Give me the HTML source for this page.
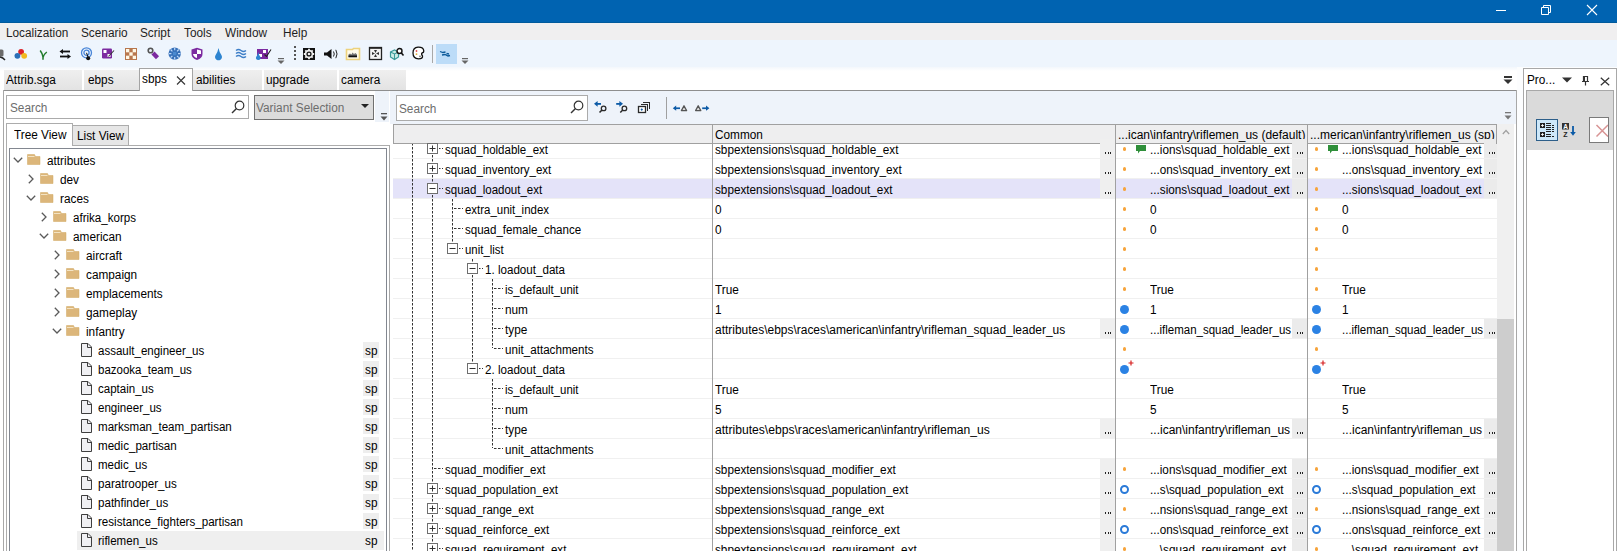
<!DOCTYPE html><html><head><meta charset="utf-8"><style>*{margin:0;padding:0}
html,body{width:1617px;height:551px;overflow:hidden;background:#fff}
body{position:relative;font-family:"Liberation Sans",sans-serif;font-size:12px}
div,span,svg{position:absolute}
.t{line-height:12px;white-space:pre}
</style></head><body><div style="left:0px;top:0px;width:1617px;height:23px;background:#0063b1"></div>
<div style="left:0px;top:22px;width:1617px;height:1px;background:#005a9c"></div>
<svg style="left:1495px;top:5px;" width="12" height="12" viewBox="0 0 12 12"><path d="M1 5.5H11" stroke="#fff" stroke-width="1"/></svg>
<svg style="left:1539px;top:4px;" width="12" height="12" viewBox="0 0 12 12"><path d="M2.5 3.5h7v7h-7z" fill="none" stroke="#fff"/><path d="M4.5 3.5V1.5h7v7h-2" fill="none" stroke="#fff"/></svg>
<svg style="left:1586px;top:4px;" width="12" height="12" viewBox="0 0 12 12"><path d="M1 1L11 11M11 1L1 11" stroke="#fff" stroke-width="1.1"/></svg>
<div style="left:0px;top:23px;width:1617px;height:17px;background:#f0eff0"></div>
<span class="t" style="left:6px;top:27px;transform:scaleX(0.9830);transform-origin:0 0;color:#1e1e1e">Localization</span>
<span class="t" style="left:81px;top:27px;transform:scaleX(0.9830);transform-origin:0 0;color:#1e1e1e">Scenario</span>
<span class="t" style="left:140px;top:27px;transform:scaleX(0.9830);transform-origin:0 0;color:#1e1e1e">Script</span>
<span class="t" style="left:184px;top:27px;transform:scaleX(0.9830);transform-origin:0 0;color:#1e1e1e">Tools</span>
<span class="t" style="left:225px;top:27px;transform:scaleX(0.9830);transform-origin:0 0;color:#1e1e1e">Window</span>
<span class="t" style="left:283px;top:27px;transform:scaleX(0.9830);transform-origin:0 0;color:#1e1e1e">Help</span>
<div style="left:0px;top:40px;width:1617px;height:27px;background:#eef5fd"></div>
<svg style="left:0px;top:48px;" width="8" height="14" viewBox="0 0 8 14"><rect x="-3" y="1.5" width="6.5" height="7" rx="1.5" fill="#6a6a6a"/><path d="M0 9Q3 9.5 5 12" fill="none" stroke="#222" stroke-width="1.4"/></svg>
<svg style="left:13px;top:47px;" width="16" height="14" viewBox="0 0 16 14"><circle cx="8.1" cy="4.8" r="2.9" fill="#dc2228"/><circle cx="4.4" cy="8.8" r="2.9" fill="#2a70b8"/><circle cx="11.2" cy="8.8" r="2.9" fill="#f2b81e"/></svg>
<svg style="left:38px;top:49px;" width="11" height="12" viewBox="0 0 11 12"><path d="M5 10.8V8Q4.5 4.5 2.2 1.5M5 8.5Q6 5 8.8 3" fill="none" stroke="#1f7a2a" stroke-width="1.5"/></svg>
<svg style="left:59px;top:48px;" width="13" height="12" viewBox="0 0 13 12"><path d="M11 3.5H3" stroke="#111" stroke-width="1.8"/><path d="M0.5 3.5L4 1v5z" fill="#111"/><path d="M1 8.5H9" stroke="#111" stroke-width="1.8"/><path d="M12 8.5L8.5 6v5z" fill="#111"/></svg>
<svg style="left:80px;top:47px;" width="14" height="14" viewBox="0 0 14 14"><circle cx="6.5" cy="5.8" r="5" fill="none" stroke="#4a86d8" stroke-width="1.3"/><circle cx="6.5" cy="5.8" r="2.6" fill="none" stroke="#4a86d8" stroke-width="1.3"/><path d="M6.5 5.8L8 10" stroke="#111" stroke-width="1"/><circle cx="8.2" cy="11.2" r="2" fill="#111"/></svg>
<svg style="left:101px;top:47px;" width="14" height="13" viewBox="0 0 14 13"><rect x="1" y="1.5" width="10" height="10" rx="1.2" fill="#7c2aa0"/><rect x="2.5" y="3" width="3" height="3" fill="#fff"/><rect x="6.5" y="7" width="3" height="3" fill="#fff"/><path d="M13 3.5L7.5 9.5" stroke="#333" stroke-width="1.1"/></svg>
<svg style="left:124px;top:47px;" width="14" height="14" viewBox="0 0 14 14"><rect x="1" y="1" width="12" height="12" fill="#b8774e"/><rect x="2" y="2" width="3.3" height="3.3" fill="#fff8e6"/><rect x="8.7" y="2" width="3.3" height="3.3" fill="#fff8e6"/><rect x="5.3" y="5.3" width="3.4" height="3.4" fill="#fff8e6"/><rect x="2" y="8.7" width="3.3" height="3.3" fill="#fff8e6"/><rect x="8.7" y="8.7" width="3.3" height="3.3" fill="#fff8e6"/></svg>
<svg style="left:146px;top:47px;" width="14" height="14" viewBox="0 0 14 14"><circle cx="4.5" cy="3.5" r="2.3" fill="none" stroke="#555" stroke-width="1.6"/><path d="M7 6L11.5 10.8" stroke="#7c2aa0" stroke-width="4.2"/></svg>
<svg style="left:167px;top:47px;" width="15" height="14" viewBox="0 0 15 14"><circle cx="7.7" cy="6.6" r="6.2" fill="#3670b8"/><g stroke="#bcd8fa" stroke-width="1.2"><path d="M7.7 0.8v2.5M7.7 9.9v2.5M1.9 6.6h2.5M11 6.6h2.5M3.6 2.5l1.8 1.8M10 8.9l1.8 1.8M11.8 2.5l-1.8 1.8M5.4 8.9l-1.8 1.8"/></g><rect x="6" y="4.9" width="3.4" height="3.4" fill="#4a8ad0"/></svg>
<svg style="left:190px;top:47px;" width="14" height="14" viewBox="0 0 14 14"><path d="M1.5 2.5L7 0.8L12.5 2.5V7Q12.5 11 7 13Q1.5 11 1.5 7z" fill="#7c2aa0"/><path d="M7 2.5L11 3.5V7H7z" fill="#fff"/><path d="M3 7H7V11Q3.5 10 3 7z" fill="#fff"/></svg>
<svg style="left:213px;top:47px;" width="11" height="14" viewBox="0 0 11 14"><path d="M5.5 1Q6.2 5 8.5 8.2Q9.8 11 7.5 12.7Q5.5 13.8 3.5 12.7Q1.2 11 2.5 8.2Q4.8 5 5.5 1z" fill="#2d84d0"/></svg>
<svg style="left:235px;top:48px;" width="12" height="11" viewBox="0 0 12 11"><g fill="none" stroke="#3e7fc8" stroke-width="1.4"><path d="M1 2.5Q3.5 0.5 6 2.5T11 2.5"/><path d="M1 5.5Q3.5 3.5 6 5.5T11 5.5"/><path d="M1 8.5Q3.5 6.5 6 8.5T11 8.5"/></g></svg>
<svg style="left:254px;top:47px;" width="18" height="14" viewBox="0 0 18 14"><rect x="3" y="2" width="11" height="10" fill="#7c2aa0"/><rect x="9" y="3" width="3" height="3" fill="#fff"/><rect x="5" y="7" width="3" height="3" fill="#fff"/><path d="M10.5 7.5L12.5 9.5L17 2.5" fill="none" stroke="#222" stroke-width="1.1"/><path d="M4.3 5Q4.8 8 6.5 10Q7.3 12.5 4.3 13Q1.3 12.5 2.1 10Q3.8 8 4.3 5z" fill="#2d84d0"/></svg>
<svg style="left:277px;top:57px;" width="8" height="7" viewBox="0 0 8 7"><rect x="1" y="1" width="6" height="1.2" fill="#666"/><path d="M0.5 3.5h7L4 7z" fill="#666"/></svg>
<div style="left:294px;top:46px;width:2px;height:2px;background:#555"></div>
<div style="left:294px;top:50px;width:2px;height:2px;background:#555"></div>
<div style="left:294px;top:54px;width:2px;height:2px;background:#555"></div>
<div style="left:294px;top:58px;width:2px;height:2px;background:#555"></div>
<svg style="left:302px;top:47px;" width="14" height="14" viewBox="0 0 14 14"><rect x="1" y="1" width="12" height="12" fill="#111"/><circle cx="7" cy="7" r="4.2" fill="#eee"/><g stroke="#eee" stroke-width="1.8"><path d="M7 1.8v10.4M1.8 7h10.4M3.3 3.3l7.4 7.4M10.7 3.3l-7.4 7.4"/></g><circle cx="7" cy="7" r="2.6" fill="#111"/><circle cx="7" cy="7" r="1.3" fill="#eee"/></svg>
<svg style="left:323px;top:48px;" width="16" height="12" viewBox="0 0 16 12"><path d="M1 4.5H4L8.5 1V11L4 7.5H1z" fill="#111"/><path d="M10.5 3.5Q12 6 10.5 8.5M12.8 1.8Q15.3 6 12.8 10.2" fill="none" stroke="#222" stroke-width="1"/></svg>
<svg style="left:345px;top:47px;" width="16" height="14" viewBox="0 0 16 14"><path d="M1.5 2.5h6l1 -1h6v11h-13z" fill="#fffbea" stroke="#edd27c" stroke-width="1.6"/><path d="M3.5 10V7.5L5 6.5L6.5 7.5L7.5 5.5L9 7L10.5 6L12 7.5V10z" fill="#777"/><rect x="3.5" y="8.5" width="8.5" height="1.8" fill="#111"/></svg>
<svg style="left:368px;top:46px;" width="15" height="15" viewBox="0 0 15 15"><rect x="1.5" y="1.5" width="12" height="12" fill="#f4f4f4" stroke="#222" stroke-width="1.3"/><rect x="1" y="1" width="13" height="1.8" fill="#222"/><g fill="#333"><path d="M7.5 7L6 4h3z"/><path d="M7.5 8L6 11h3z"/><path d="M7 7.5L4 6v3z"/><path d="M8 7.5L11 6v3z"/></g></svg>
<svg style="left:389px;top:47px;" width="16" height="14" viewBox="0 0 16 14"><path d="M1.5 5L5.5 3L9.5 5V10L5.5 12.5L1.5 10z" fill="#cfeee8" stroke="#3a9a9a" stroke-width="1.2"/><path d="M1.5 5L5.5 7L9.5 5M5.5 7V12.5" fill="none" stroke="#3a9a9a" stroke-width="1.1"/><circle cx="10.5" cy="4" r="2.5" fill="#fff" stroke="#111" stroke-width="1.4"/><path d="M12.2 5.8L14.5 8.5" stroke="#111" stroke-width="1.6"/></svg>
<svg style="left:412px;top:46px;" width="13" height="14" viewBox="0 0 13 14"><path d="M6 1.2Q11.5 1 11.8 5Q12 6.5 10 7Q9 8 10.5 10Q11 12.8 6.5 12.8Q1 12.5 1 7Q1 1.5 6 1.2z" fill="#fff" stroke="#111" stroke-width="1.3"/><circle cx="4.5" cy="5" r="0.9" fill="#e05050"/><circle cx="4.5" cy="8.2" r="0.9" fill="#e0b040"/><circle cx="8" cy="10.3" r="0.9" fill="#777"/></svg>
<div style="left:432px;top:45px;width:1px;height:18px;background:#a8a8a8"></div>
<div style="left:436px;top:44px;width:21px;height:20px;background:#bcdcf8"></div>
<svg style="left:439px;top:50px;" width="14" height="8" viewBox="0 0 14 8"><path d="M1 1.5L4 2.5L6.5 2M3 5L6 4.5L9 6L11 5.5M7.5 3.5L10 4" fill="none" stroke="#0b5a9a" stroke-width="1.3"/></svg>
<svg style="left:461px;top:57px;" width="8" height="7" viewBox="0 0 8 7"><rect x="1" y="1" width="6" height="1.2" fill="#666"/><path d="M0.5 3.5h7L4 7z" fill="#666"/></svg>
<div style="left:0px;top:67px;width:1517px;height:23px;background:linear-gradient(#f3f7fc,#fff 4px)"></div>
<div style="left:4px;top:70px;width:78px;height:20px;background:linear-gradient(#efefef,#e3e3e3)"></div>
<span class="t" style="left:6px;top:74px;transform:scaleX(0.9830);transform-origin:0 0;color:#000">Attrib.sga</span>
<div style="left:84px;top:70px;width:55px;height:20px;background:linear-gradient(#efefef,#e3e3e3)"></div>
<span class="t" style="left:88px;top:74px;transform:scaleX(0.9830);transform-origin:0 0;color:#000">ebps</span>
<div style="left:193px;top:70px;width:69px;height:20px;background:linear-gradient(#efefef,#e3e3e3)"></div>
<span class="t" style="left:196px;top:74px;transform:scaleX(0.9830);transform-origin:0 0;color:#000">abilities</span>
<div style="left:264px;top:70px;width:73px;height:20px;background:linear-gradient(#efefef,#e3e3e3)"></div>
<span class="t" style="left:266px;top:74px;transform:scaleX(0.9830);transform-origin:0 0;color:#000">upgrade</span>
<div style="left:339px;top:70px;width:67px;height:20px;background:linear-gradient(#efefef,#e3e3e3)"></div>
<span class="t" style="left:341px;top:74px;transform:scaleX(0.9830);transform-origin:0 0;color:#000">camera</span>
<div style="left:139px;top:68px;width:54px;height:23px;background:#fff;border:1px solid #a4a4a4;border-bottom:none;box-sizing:border-box"></div>
<span class="t" style="left:142px;top:73px;transform:scaleX(0.9830);transform-origin:0 0;color:#000">sbps</span>
<svg style="left:176px;top:75px;" width="10" height="10" viewBox="0 0 10 10"><path d="M1 1.5L9 9.5M9 1.5L1 9.5" stroke="#333" stroke-width="1.1"/></svg>
<svg style="left:1503px;top:75px;" width="10" height="10" viewBox="0 0 10 10"><rect x="1" y="1" width="8" height="2" fill="#333"/><path d="M0.5 4.5h9L5 9z" fill="#333"/></svg>
<div style="left:3px;top:90px;width:136px;height:1px;background:#8e8e8e"></div>
<div style="left:193px;top:90px;width:1324px;height:1px;background:#8e8e8e"></div>
<div style="left:3px;top:90px;width:1px;height:461px;background:#a8a8a8"></div>
<div style="left:1516px;top:90px;width:1px;height:461px;background:#a8a8a8"></div>
<div style="left:4px;top:91px;width:385px;height:460px;background:#fff"></div>
<div style="left:6px;top:95px;width:243px;height:24px;background:#fff;border:1px solid #ababab;box-sizing:border-box"></div>
<span class="t" style="left:10px;top:102px;transform:scaleX(0.9830);transform-origin:0 0;color:#6d6d6d">Search</span>
<div style="left:254px;top:95px;width:120px;height:25px;background:#dcdcdc;border:1px solid #707070;box-sizing:border-box"></div>
<span class="t" style="left:256px;top:102px;transform:scaleX(0.9830);transform-origin:0 0;color:#6d6d6d">Variant Selection</span>
<svg style="left:361px;top:104px;" width="8" height="5" viewBox="0 0 8 5"><path d="M0 0h8L4 4z" fill="#222"/></svg>
<div style="left:375px;top:91px;width:14px;height:31px;background:#eef3fa"></div>
<svg style="left:380px;top:113px;" width="8" height="8" viewBox="0 0 8 8"><rect x="1" y="0" width="6" height="1.3" fill="#555"/><path d="M0.5 3.5h7L4 7.5z" fill="#555"/></svg>
<div style="left:6px;top:145px;width:383px;height:1px;background:#acacac"></div>
<div style="left:6px;top:123px;width:67px;height:23px;background:#fff;border:1px solid #acacac;border-bottom:none;box-sizing:border-box"></div>
<div style="left:73px;top:125px;width:56px;height:21px;background:#e6e6e6;border:1px solid #acacac;border-left:none;box-sizing:border-box"></div>
<span class="t" style="left:14px;top:129px;transform:scaleX(0.9830);transform-origin:0 0;color:#000">Tree View</span>
<span class="t" style="left:77px;top:130px;transform:scaleX(0.9830);transform-origin:0 0;color:#000">List View</span>
<div style="left:6px;top:123px;width:1px;height:428px;background:#acacac"></div>
<div style="left:9px;top:148px;width:378px;height:403px;border:1px solid #828790;border-bottom:none;box-sizing:border-box;background:#fff"></div>
<div style="left:389px;top:145px;width:1px;height:406px;background:#a8a8a8"></div>
<div style="left:391px;top:91px;width:1px;height:460px;background:#eef1f5"></div>
<svg style="left:13px;top:157px;" width="10" height="6" viewBox="0 0 10 6"><path d="M0.8 0.8L5 5L9.2 0.8" fill="none" stroke="#5a5a5a" stroke-width="1.3"/></svg>
<svg style="left:27px;top:153px;" width="14" height="12" viewBox="0 0 14 12"><path d="M0.5 1.5h7l1 2h4.5v8h-12.5z" fill="#dcb67a"/><path d="M0.5 1.5h7l1 2h4.5v8h-12.5z" fill="none" stroke="#d0a860" stroke-width="0.5"/><rect x="1" y="3" width="6.5" height="1" fill="#f3e3c3"/></svg>
<span class="t" style="left:47px;top:155px;transform:scaleX(0.9830);transform-origin:0 0;color:#000">attributes</span>
<svg style="left:28px;top:174px;" width="6" height="10" viewBox="0 0 6 10"><path d="M0.8 0.8L5 5L0.8 9.2" fill="none" stroke="#5a5a5a" stroke-width="1.3"/></svg>
<svg style="left:40px;top:172px;" width="14" height="12" viewBox="0 0 14 12"><path d="M0.5 1.5h7l1 2h4.5v8h-12.5z" fill="#dcb67a"/><path d="M0.5 1.5h7l1 2h4.5v8h-12.5z" fill="none" stroke="#d0a860" stroke-width="0.5"/><rect x="1" y="3" width="6.5" height="1" fill="#f3e3c3"/></svg>
<span class="t" style="left:60px;top:174px;transform:scaleX(0.9830);transform-origin:0 0;color:#000">dev</span>
<svg style="left:26px;top:195px;" width="10" height="6" viewBox="0 0 10 6"><path d="M0.8 0.8L5 5L9.2 0.8" fill="none" stroke="#5a5a5a" stroke-width="1.3"/></svg>
<svg style="left:40px;top:191px;" width="14" height="12" viewBox="0 0 14 12"><path d="M0.5 1.5h7l1 2h4.5v8h-12.5z" fill="#dcb67a"/><path d="M0.5 1.5h7l1 2h4.5v8h-12.5z" fill="none" stroke="#d0a860" stroke-width="0.5"/><rect x="1" y="3" width="6.5" height="1" fill="#f3e3c3"/></svg>
<span class="t" style="left:60px;top:193px;transform:scaleX(0.9830);transform-origin:0 0;color:#000">races</span>
<svg style="left:41px;top:212px;" width="6" height="10" viewBox="0 0 6 10"><path d="M0.8 0.8L5 5L0.8 9.2" fill="none" stroke="#5a5a5a" stroke-width="1.3"/></svg>
<svg style="left:53px;top:210px;" width="14" height="12" viewBox="0 0 14 12"><path d="M0.5 1.5h7l1 2h4.5v8h-12.5z" fill="#dcb67a"/><path d="M0.5 1.5h7l1 2h4.5v8h-12.5z" fill="none" stroke="#d0a860" stroke-width="0.5"/><rect x="1" y="3" width="6.5" height="1" fill="#f3e3c3"/></svg>
<span class="t" style="left:73px;top:212px;transform:scaleX(0.9633);transform-origin:0 0;color:#000">afrika_korps</span>
<svg style="left:39px;top:233px;" width="10" height="6" viewBox="0 0 10 6"><path d="M0.8 0.8L5 5L9.2 0.8" fill="none" stroke="#5a5a5a" stroke-width="1.3"/></svg>
<svg style="left:53px;top:229px;" width="14" height="12" viewBox="0 0 14 12"><path d="M0.5 1.5h7l1 2h4.5v8h-12.5z" fill="#dcb67a"/><path d="M0.5 1.5h7l1 2h4.5v8h-12.5z" fill="none" stroke="#d0a860" stroke-width="0.5"/><rect x="1" y="3" width="6.5" height="1" fill="#f3e3c3"/></svg>
<span class="t" style="left:73px;top:231px;transform:scaleX(0.9830);transform-origin:0 0;color:#000">american</span>
<svg style="left:54px;top:250px;" width="6" height="10" viewBox="0 0 6 10"><path d="M0.8 0.8L5 5L0.8 9.2" fill="none" stroke="#5a5a5a" stroke-width="1.3"/></svg>
<svg style="left:66px;top:248px;" width="14" height="12" viewBox="0 0 14 12"><path d="M0.5 1.5h7l1 2h4.5v8h-12.5z" fill="#dcb67a"/><path d="M0.5 1.5h7l1 2h4.5v8h-12.5z" fill="none" stroke="#d0a860" stroke-width="0.5"/><rect x="1" y="3" width="6.5" height="1" fill="#f3e3c3"/></svg>
<span class="t" style="left:86px;top:250px;transform:scaleX(0.9830);transform-origin:0 0;color:#000">aircraft</span>
<svg style="left:54px;top:269px;" width="6" height="10" viewBox="0 0 6 10"><path d="M0.8 0.8L5 5L0.8 9.2" fill="none" stroke="#5a5a5a" stroke-width="1.3"/></svg>
<svg style="left:66px;top:267px;" width="14" height="12" viewBox="0 0 14 12"><path d="M0.5 1.5h7l1 2h4.5v8h-12.5z" fill="#dcb67a"/><path d="M0.5 1.5h7l1 2h4.5v8h-12.5z" fill="none" stroke="#d0a860" stroke-width="0.5"/><rect x="1" y="3" width="6.5" height="1" fill="#f3e3c3"/></svg>
<span class="t" style="left:86px;top:269px;transform:scaleX(0.9830);transform-origin:0 0;color:#000">campaign</span>
<svg style="left:54px;top:288px;" width="6" height="10" viewBox="0 0 6 10"><path d="M0.8 0.8L5 5L0.8 9.2" fill="none" stroke="#5a5a5a" stroke-width="1.3"/></svg>
<svg style="left:66px;top:286px;" width="14" height="12" viewBox="0 0 14 12"><path d="M0.5 1.5h7l1 2h4.5v8h-12.5z" fill="#dcb67a"/><path d="M0.5 1.5h7l1 2h4.5v8h-12.5z" fill="none" stroke="#d0a860" stroke-width="0.5"/><rect x="1" y="3" width="6.5" height="1" fill="#f3e3c3"/></svg>
<span class="t" style="left:86px;top:288px;transform:scaleX(0.9830);transform-origin:0 0;color:#000">emplacements</span>
<svg style="left:54px;top:307px;" width="6" height="10" viewBox="0 0 6 10"><path d="M0.8 0.8L5 5L0.8 9.2" fill="none" stroke="#5a5a5a" stroke-width="1.3"/></svg>
<svg style="left:66px;top:305px;" width="14" height="12" viewBox="0 0 14 12"><path d="M0.5 1.5h7l1 2h4.5v8h-12.5z" fill="#dcb67a"/><path d="M0.5 1.5h7l1 2h4.5v8h-12.5z" fill="none" stroke="#d0a860" stroke-width="0.5"/><rect x="1" y="3" width="6.5" height="1" fill="#f3e3c3"/></svg>
<span class="t" style="left:86px;top:307px;transform:scaleX(0.9830);transform-origin:0 0;color:#000">gameplay</span>
<svg style="left:52px;top:328px;" width="10" height="6" viewBox="0 0 10 6"><path d="M0.8 0.8L5 5L9.2 0.8" fill="none" stroke="#5a5a5a" stroke-width="1.3"/></svg>
<svg style="left:66px;top:324px;" width="14" height="12" viewBox="0 0 14 12"><path d="M0.5 1.5h7l1 2h4.5v8h-12.5z" fill="#dcb67a"/><path d="M0.5 1.5h7l1 2h4.5v8h-12.5z" fill="none" stroke="#d0a860" stroke-width="0.5"/><rect x="1" y="3" width="6.5" height="1" fill="#f3e3c3"/></svg>
<span class="t" style="left:86px;top:326px;transform:scaleX(0.9830);transform-origin:0 0;color:#000">infantry</span>
<svg style="left:81px;top:343px;" width="12" height="14" viewBox="0 0 12 14"><path d="M0.5 0.5h6.5l3.5 3.5v9.5h-10z" fill="#f0f0f3" stroke="#3f3f3f"/><path d="M6.5 0.5v4h4" fill="none" stroke="#3f3f3f"/></svg>
<span class="t" style="left:98px;top:345px;transform:scaleX(0.9597);transform-origin:0 0;color:#000">assault_engineer_us</span>
<div style="left:363px;top:342px;width:16px;height:16px;background:#eeeeee"></div>
<span class="t" style="left:365px;top:345px;transform:scaleX(0.9830);transform-origin:0 0;color:#000">sp</span>
<svg style="left:81px;top:362px;" width="12" height="14" viewBox="0 0 12 14"><path d="M0.5 0.5h6.5l3.5 3.5v9.5h-10z" fill="#f0f0f3" stroke="#3f3f3f"/><path d="M6.5 0.5v4h4" fill="none" stroke="#3f3f3f"/></svg>
<span class="t" style="left:98px;top:364px;transform:scaleX(0.9567);transform-origin:0 0;color:#000">bazooka_team_us</span>
<div style="left:363px;top:361px;width:16px;height:16px;background:#eeeeee"></div>
<span class="t" style="left:365px;top:364px;transform:scaleX(0.9830);transform-origin:0 0;color:#000">sp</span>
<svg style="left:81px;top:381px;" width="12" height="14" viewBox="0 0 12 14"><path d="M0.5 0.5h6.5l3.5 3.5v9.5h-10z" fill="#f0f0f3" stroke="#3f3f3f"/><path d="M6.5 0.5v4h4" fill="none" stroke="#3f3f3f"/></svg>
<span class="t" style="left:98px;top:383px;transform:scaleX(0.9608);transform-origin:0 0;color:#000">captain_us</span>
<div style="left:363px;top:380px;width:16px;height:16px;background:#eeeeee"></div>
<span class="t" style="left:365px;top:383px;transform:scaleX(0.9830);transform-origin:0 0;color:#000">sp</span>
<svg style="left:81px;top:400px;" width="12" height="14" viewBox="0 0 12 14"><path d="M0.5 0.5h6.5l3.5 3.5v9.5h-10z" fill="#f0f0f3" stroke="#3f3f3f"/><path d="M6.5 0.5v4h4" fill="none" stroke="#3f3f3f"/></svg>
<span class="t" style="left:98px;top:402px;transform:scaleX(0.9635);transform-origin:0 0;color:#000">engineer_us</span>
<div style="left:363px;top:399px;width:16px;height:16px;background:#eeeeee"></div>
<span class="t" style="left:365px;top:402px;transform:scaleX(0.9830);transform-origin:0 0;color:#000">sp</span>
<svg style="left:81px;top:419px;" width="12" height="14" viewBox="0 0 12 14"><path d="M0.5 0.5h6.5l3.5 3.5v9.5h-10z" fill="#f0f0f3" stroke="#3f3f3f"/><path d="M6.5 0.5v4h4" fill="none" stroke="#3f3f3f"/></svg>
<span class="t" style="left:98px;top:421px;transform:scaleX(0.9644);transform-origin:0 0;color:#000">marksman_team_partisan</span>
<div style="left:363px;top:418px;width:16px;height:16px;background:#eeeeee"></div>
<span class="t" style="left:365px;top:421px;transform:scaleX(0.9830);transform-origin:0 0;color:#000">sp</span>
<svg style="left:81px;top:438px;" width="12" height="14" viewBox="0 0 12 14"><path d="M0.5 0.5h6.5l3.5 3.5v9.5h-10z" fill="#f0f0f3" stroke="#3f3f3f"/><path d="M6.5 0.5v4h4" fill="none" stroke="#3f3f3f"/></svg>
<span class="t" style="left:98px;top:440px;transform:scaleX(0.9671);transform-origin:0 0;color:#000">medic_partisan</span>
<div style="left:363px;top:437px;width:16px;height:16px;background:#eeeeee"></div>
<span class="t" style="left:365px;top:440px;transform:scaleX(0.9830);transform-origin:0 0;color:#000">sp</span>
<svg style="left:81px;top:457px;" width="12" height="14" viewBox="0 0 12 14"><path d="M0.5 0.5h6.5l3.5 3.5v9.5h-10z" fill="#f0f0f3" stroke="#3f3f3f"/><path d="M6.5 0.5v4h4" fill="none" stroke="#3f3f3f"/></svg>
<span class="t" style="left:98px;top:459px;transform:scaleX(0.9579);transform-origin:0 0;color:#000">medic_us</span>
<div style="left:363px;top:456px;width:16px;height:16px;background:#eeeeee"></div>
<span class="t" style="left:365px;top:459px;transform:scaleX(0.9830);transform-origin:0 0;color:#000">sp</span>
<svg style="left:81px;top:476px;" width="12" height="14" viewBox="0 0 12 14"><path d="M0.5 0.5h6.5l3.5 3.5v9.5h-10z" fill="#f0f0f3" stroke="#3f3f3f"/><path d="M6.5 0.5v4h4" fill="none" stroke="#3f3f3f"/></svg>
<span class="t" style="left:98px;top:478px;transform:scaleX(0.9672);transform-origin:0 0;color:#000">paratrooper_us</span>
<div style="left:363px;top:475px;width:16px;height:16px;background:#eeeeee"></div>
<span class="t" style="left:365px;top:478px;transform:scaleX(0.9830);transform-origin:0 0;color:#000">sp</span>
<svg style="left:81px;top:495px;" width="12" height="14" viewBox="0 0 12 14"><path d="M0.5 0.5h6.5l3.5 3.5v9.5h-10z" fill="#f0f0f3" stroke="#3f3f3f"/><path d="M6.5 0.5v4h4" fill="none" stroke="#3f3f3f"/></svg>
<span class="t" style="left:98px;top:497px;transform:scaleX(0.9653);transform-origin:0 0;color:#000">pathfinder_us</span>
<div style="left:363px;top:494px;width:16px;height:16px;background:#eeeeee"></div>
<span class="t" style="left:365px;top:497px;transform:scaleX(0.9830);transform-origin:0 0;color:#000">sp</span>
<svg style="left:81px;top:514px;" width="12" height="14" viewBox="0 0 12 14"><path d="M0.5 0.5h6.5l3.5 3.5v9.5h-10z" fill="#f0f0f3" stroke="#3f3f3f"/><path d="M6.5 0.5v4h4" fill="none" stroke="#3f3f3f"/></svg>
<span class="t" style="left:98px;top:516px;transform:scaleX(0.9658);transform-origin:0 0;color:#000">resistance_fighters_partisan</span>
<div style="left:363px;top:513px;width:16px;height:16px;background:#eeeeee"></div>
<span class="t" style="left:365px;top:516px;transform:scaleX(0.9830);transform-origin:0 0;color:#000">sp</span>
<div style="left:77px;top:531px;width:307px;height:19px;background:#efefef"></div>
<svg style="left:81px;top:533px;" width="12" height="14" viewBox="0 0 12 14"><path d="M0.5 0.5h6.5l3.5 3.5v9.5h-10z" fill="#f0f0f3" stroke="#3f3f3f"/><path d="M6.5 0.5v4h4" fill="none" stroke="#3f3f3f"/></svg>
<span class="t" style="left:98px;top:535px;transform:scaleX(0.9622);transform-origin:0 0;color:#000">riflemen_us</span>
<div style="left:363px;top:532px;width:16px;height:16px;background:#eeeeee"></div>
<span class="t" style="left:365px;top:535px;transform:scaleX(0.9830);transform-origin:0 0;color:#000">sp</span>
<div style="left:390px;top:91px;width:126px;height:460px;background:#fff"></div>
<div style="left:390px;top:91px;width:1126px;height:33px;background:#eef3fa"></div>
<div style="left:396px;top:95px;width:192px;height:26px;background:#fff;border:1px solid #ababab;box-sizing:border-box"></div>
<span class="t" style="left:399px;top:103px;transform:scaleX(0.9830);transform-origin:0 0;color:#6d6d6d">Search</span>
<svg style="left:231px;top:100px;" width="14" height="14" viewBox="0 0 14 14"><circle cx="8.5" cy="5.5" r="4.3" fill="none" stroke="#333" stroke-width="1.2"/><path d="M5.5 8.5L1 13" stroke="#333" stroke-width="1.5"/></svg>
<svg style="left:570px;top:100px;" width="14" height="14" viewBox="0 0 14 14"><circle cx="8.5" cy="5.5" r="4.3" fill="none" stroke="#333" stroke-width="1.2"/><path d="M5.5 8.5L1 13" stroke="#333" stroke-width="1.5"/></svg>
<svg style="left:593px;top:100px;" width="14" height="14" viewBox="0 0 14 14"><path d="M1 3.8L4.6 0.9V6.7z" fill="#0c5aa6"/><rect x="4" y="3" width="4" height="1.8" fill="#0c5aa6"/><circle cx="10.6" cy="8.4" r="2.3" fill="none" stroke="#2a2a2a" stroke-width="1.3"/><path d="M9 10L6.5 12.6" stroke="#2a2a2a" stroke-width="1.5"/></svg>
<svg style="left:615px;top:100px;" width="14" height="14" viewBox="0 0 14 14"><path d="M8 3.8L4.4 0.9V6.7z" fill="#0c5aa6"/><rect x="1.2" y="3" width="4" height="1.8" fill="#0c5aa6"/><circle cx="9.4" cy="8.4" r="2.3" fill="none" stroke="#2a2a2a" stroke-width="1.3"/><path d="M7.8 10L5.3 12.6" stroke="#2a2a2a" stroke-width="1.5"/></svg>
<svg style="left:637px;top:100px;" width="14" height="14" viewBox="0 0 14 14"><rect x="1.5" y="6.5" width="7" height="6" fill="#fff" stroke="#2a2a2a" stroke-width="1.3"/><path d="M3.5 4.5H10.5V10.5M5.5 2.5H12.5V8.5" fill="none" stroke="#2a2a2a" stroke-width="1" shape-rendering="crispEdges"/><path d="M4.75 8.2L6 9.6L4.75 11L3.5 9.6z" fill="#0c5aa6"/></svg>
<div style="left:666px;top:97px;width:1px;height:22px;background:#a0a0a0"></div>
<svg style="left:672px;top:104px;" width="16" height="8" viewBox="0 0 16 8"><path d="M0.8 4.2L4.2 1.6V6.8z" fill="#0c5aa6"/><rect x="3.5" y="3.4" width="4.5" height="1.7" fill="#0c5aa6"/><path d="M12 1.8L14.6 6.6H9.4z" fill="#ddd" stroke="#555" stroke-width="1.3" stroke-linejoin="round"/></svg>
<svg style="left:694px;top:104px;" width="16" height="8" viewBox="0 0 16 8"><path d="M15.4 4.2L12 1.6V6.8z" fill="#0c5aa6"/><rect x="8.2" y="3.4" width="4.5" height="1.7" fill="#0c5aa6"/><path d="M4.2 1.8L6.8 6.6H1.6z" fill="#ddd" stroke="#555" stroke-width="1.3" stroke-linejoin="round"/></svg>
<svg style="left:1504px;top:112px;" width="8" height="8" viewBox="0 0 8 8"><rect x="1" y="0" width="6" height="1.3" fill="#777"/><path d="M0.5 3.5h7L4 7.5z" fill="#777"/></svg>
<div style="left:393px;top:124px;width:1104px;height:20px;background:#eeeeef;border-top:1px solid #a0a0a0;border-bottom:1px solid #a0a0a0;border-left:1px solid #a0a0a0;box-sizing:border-box"></div>
<div style="left:393px;top:144px;width:1104px;height:407px;background:#fff"></div>
<span class="t" style="left:715px;top:129px;transform:scaleX(0.9830);transform-origin:0 0;color:#000">Common</span>
<span class="t" style="left:1118px;top:129px;color:#000">...ican\infantry\riflemen_us (default)</span>
<span class="t" style="left:1310px;top:129px;color:#000">...merican\infantry\riflemen_us (sp)</span>
<div style="left:1497px;top:124px;width:17px;height:427px;background:#f0f0f0"></div>
<div style="left:1497px;top:319px;width:17px;height:232px;background:#cdcdcd"></div>
<svg style="left:1502px;top:129px;" width="8" height="6" viewBox="0 0 8 6"><path d="M0.8 5L4 1.5L7.2 5" fill="none" stroke="#a0a0a0" stroke-width="1.2"/></svg>
<div style="left:393px;top:178px;width:722px;height:20px;background:#e4e3f9"></div>
<div style="left:1116px;top:178px;width:191px;height:20px;background:#e4e3f9"></div>
<div style="left:1308px;top:178px;width:189px;height:20px;background:#e4e3f9"></div>
<div style="left:393px;top:158px;width:1104px;height:1px;background:#f0f0f0"></div>
<div style="left:393px;top:178px;width:1104px;height:1px;background:#f0f0f0"></div>
<div style="left:393px;top:198px;width:1104px;height:1px;background:#f0f0f0"></div>
<div style="left:393px;top:218px;width:1104px;height:1px;background:#f0f0f0"></div>
<div style="left:393px;top:238px;width:1104px;height:1px;background:#f0f0f0"></div>
<div style="left:393px;top:258px;width:1104px;height:1px;background:#f0f0f0"></div>
<div style="left:393px;top:278px;width:1104px;height:1px;background:#f0f0f0"></div>
<div style="left:393px;top:298px;width:1104px;height:1px;background:#f0f0f0"></div>
<div style="left:393px;top:318px;width:1104px;height:1px;background:#f0f0f0"></div>
<div style="left:393px;top:338px;width:1104px;height:1px;background:#f0f0f0"></div>
<div style="left:393px;top:358px;width:1104px;height:1px;background:#f0f0f0"></div>
<div style="left:393px;top:378px;width:1104px;height:1px;background:#f0f0f0"></div>
<div style="left:393px;top:398px;width:1104px;height:1px;background:#f0f0f0"></div>
<div style="left:393px;top:418px;width:1104px;height:1px;background:#f0f0f0"></div>
<div style="left:393px;top:438px;width:1104px;height:1px;background:#f0f0f0"></div>
<div style="left:393px;top:458px;width:1104px;height:1px;background:#f0f0f0"></div>
<div style="left:393px;top:478px;width:1104px;height:1px;background:#f0f0f0"></div>
<div style="left:393px;top:498px;width:1104px;height:1px;background:#f0f0f0"></div>
<div style="left:393px;top:518px;width:1104px;height:1px;background:#f0f0f0"></div>
<div style="left:393px;top:538px;width:1104px;height:1px;background:#f0f0f0"></div>
<div style="left:393px;top:558px;width:1104px;height:1px;background:#f0f0f0"></div>
<svg style="left:0;top:0" width="1617" height="551" viewBox="0 0 1617 551"><g stroke="#333" stroke-width="1" stroke-dasharray="2.5 1.5" fill="none"><path d="M439 148.5L443 148.5" stroke-dashoffset="1"/><path d="M439 168.5L443 168.5" stroke-dashoffset="1"/><path d="M439 188.5L443 188.5" stroke-dashoffset="1"/><path d="M453 208.5L463 208.5" stroke-dashoffset="3"/><path d="M453 228.5L463 228.5" stroke-dashoffset="3"/><path d="M459 248.5L463 248.5" stroke-dashoffset="1"/><path d="M479 268.5L483 268.5" stroke-dashoffset="1"/><path d="M493 288.5L503 288.5" stroke-dashoffset="3"/><path d="M493 308.5L503 308.5" stroke-dashoffset="3"/><path d="M493 328.5L503 328.5" stroke-dashoffset="3"/><path d="M493 348.5L503 348.5" stroke-dashoffset="3"/><path d="M479 368.5L483 368.5" stroke-dashoffset="1"/><path d="M493 388.5L503 388.5" stroke-dashoffset="3"/><path d="M493 408.5L503 408.5" stroke-dashoffset="3"/><path d="M493 428.5L503 428.5" stroke-dashoffset="3"/><path d="M493 448.5L503 448.5" stroke-dashoffset="3"/><path d="M433 468.5L443 468.5" stroke-dashoffset="3"/><path d="M439 488.5L443 488.5" stroke-dashoffset="1"/><path d="M439 508.5L443 508.5" stroke-dashoffset="1"/><path d="M439 528.5L443 528.5" stroke-dashoffset="1"/><path d="M439 548.5L443 548.5" stroke-dashoffset="1"/><path d="M412.5 144L412.5 551" stroke-dashoffset="1"/><path d="M432.5 144L432.5 551" stroke-dashoffset="1"/><path d="M452.5 198L452.5 248" stroke-dashoffset="3"/><path d="M472.5 258L472.5 368" stroke-dashoffset="3"/><path d="M492.5 278L492.5 348" stroke-dashoffset="3"/><path d="M492.5 378L492.5 448" stroke-dashoffset="3"/></g></svg>
<svg style="left:427px;top:143px" width="11" height="11" viewBox="0 0 11 11"><rect x="0.5" y="0.5" width="10" height="10" fill="#fff" stroke="#6e6e6e"/><path d="M5.5 2.5v6" stroke="#333"/><path d="M2.5 5.5h6" stroke="#333"/></svg>
<span class="t" style="left:445px;top:144px;transform:scaleX(0.9590);transform-origin:0 0;color:#000">squad_holdable_ext</span>
<span class="t" style="left:715px;top:144px;transform:scaleX(0.9784);transform-origin:0 0;color:#000">sbpextensions\squad_holdable_ext</span>
<div style="left:1100px;top:139px;width:15px;height:19px;background:#efefef"></div>
<div style="left:1105.0px;top:152px;width:1.2px;height:2px;background:#222"></div>
<div style="left:1107.5px;top:152px;width:1.2px;height:2px;background:#222"></div>
<div style="left:1110.0px;top:152px;width:1.2px;height:2px;background:#222"></div>
<div style="left:1122.75px;top:147.25px;width:3.5px;height:3.5px;border-radius:50%;background:#f7a43c"></div>
<svg style="left:1136px;top:145px;" width="11" height="9" viewBox="0 0 11 9"><path d="M0 0h10v6h-6l-2 2.5v-2.5h-2z" fill="#2f8f3a"/></svg>
<span class="t" style="left:1150px;top:144px;transform:scaleX(0.9769);transform-origin:0 0;color:#000">...ions\squad_holdable_ext</span>
<div style="left:1292px;top:139px;width:15px;height:19px;background:#ebebeb"></div>
<div style="left:1297.0px;top:152px;width:1.2px;height:2px;background:#222"></div>
<div style="left:1299.5px;top:152px;width:1.2px;height:2px;background:#222"></div>
<div style="left:1302.0px;top:152px;width:1.2px;height:2px;background:#222"></div>
<div style="left:1314.75px;top:147.25px;width:3.5px;height:3.5px;border-radius:50%;background:#f7a43c"></div>
<svg style="left:1328px;top:145px;" width="11" height="9" viewBox="0 0 11 9"><path d="M0 0h10v6h-6l-2 2.5v-2.5h-2z" fill="#2f8f3a"/></svg>
<span class="t" style="left:1342px;top:144px;transform:scaleX(0.9769);transform-origin:0 0;color:#000">...ions\squad_holdable_ext</span>
<div style="left:1484px;top:139px;width:13px;height:19px;background:#ebebeb"></div>
<div style="left:1489.0px;top:152px;width:1.2px;height:2px;background:#222"></div>
<div style="left:1491.5px;top:152px;width:1.2px;height:2px;background:#222"></div>
<div style="left:1494.0px;top:152px;width:1.2px;height:2px;background:#222"></div>
<svg style="left:427px;top:163px" width="11" height="11" viewBox="0 0 11 11"><rect x="0.5" y="0.5" width="10" height="10" fill="#fff" stroke="#6e6e6e"/><path d="M5.5 2.5v6" stroke="#333"/><path d="M2.5 5.5h6" stroke="#333"/></svg>
<span class="t" style="left:445px;top:164px;transform:scaleX(0.9597);transform-origin:0 0;color:#000">squad_inventory_ext</span>
<span class="t" style="left:715px;top:164px;transform:scaleX(0.9784);transform-origin:0 0;color:#000">sbpextensions\squad_inventory_ext</span>
<div style="left:1100px;top:159px;width:15px;height:19px;background:#efefef"></div>
<div style="left:1105.0px;top:172px;width:1.2px;height:2px;background:#222"></div>
<div style="left:1107.5px;top:172px;width:1.2px;height:2px;background:#222"></div>
<div style="left:1110.0px;top:172px;width:1.2px;height:2px;background:#222"></div>
<div style="left:1122.75px;top:167.25px;width:3.5px;height:3.5px;border-radius:50%;background:#f7a43c"></div>
<span class="t" style="left:1150px;top:164px;transform:scaleX(0.9769);transform-origin:0 0;color:#000">...ons\squad_inventory_ext</span>
<div style="left:1292px;top:159px;width:15px;height:19px;background:#ebebeb"></div>
<div style="left:1297.0px;top:172px;width:1.2px;height:2px;background:#222"></div>
<div style="left:1299.5px;top:172px;width:1.2px;height:2px;background:#222"></div>
<div style="left:1302.0px;top:172px;width:1.2px;height:2px;background:#222"></div>
<div style="left:1314.75px;top:167.25px;width:3.5px;height:3.5px;border-radius:50%;background:#f7a43c"></div>
<span class="t" style="left:1342px;top:164px;transform:scaleX(0.9769);transform-origin:0 0;color:#000">...ons\squad_inventory_ext</span>
<div style="left:1484px;top:159px;width:13px;height:19px;background:#ebebeb"></div>
<div style="left:1489.0px;top:172px;width:1.2px;height:2px;background:#222"></div>
<div style="left:1491.5px;top:172px;width:1.2px;height:2px;background:#222"></div>
<div style="left:1494.0px;top:172px;width:1.2px;height:2px;background:#222"></div>
<svg style="left:427px;top:183px" width="11" height="11" viewBox="0 0 11 11"><rect x="0.5" y="0.5" width="10" height="10" fill="#fff" stroke="#6e6e6e"/><path d="M2.5 5.5h6" stroke="#333"/></svg>
<span class="t" style="left:445px;top:184px;transform:scaleX(0.9576);transform-origin:0 0;color:#000">squad_loadout_ext</span>
<span class="t" style="left:715px;top:184px;transform:scaleX(0.9782);transform-origin:0 0;color:#000">sbpextensions\squad_loadout_ext</span>
<div style="left:1100px;top:179px;width:15px;height:19px;background:#efefef"></div>
<div style="left:1105.0px;top:192px;width:1.2px;height:2px;background:#222"></div>
<div style="left:1107.5px;top:192px;width:1.2px;height:2px;background:#222"></div>
<div style="left:1110.0px;top:192px;width:1.2px;height:2px;background:#222"></div>
<div style="left:1122.75px;top:187.25px;width:3.5px;height:3.5px;border-radius:50%;background:#f7a43c"></div>
<span class="t" style="left:1150px;top:184px;transform:scaleX(0.9769);transform-origin:0 0;color:#000">...sions\squad_loadout_ext</span>
<div style="left:1292px;top:179px;width:15px;height:19px;background:#ebebeb"></div>
<div style="left:1297.0px;top:192px;width:1.2px;height:2px;background:#222"></div>
<div style="left:1299.5px;top:192px;width:1.2px;height:2px;background:#222"></div>
<div style="left:1302.0px;top:192px;width:1.2px;height:2px;background:#222"></div>
<div style="left:1314.75px;top:187.25px;width:3.5px;height:3.5px;border-radius:50%;background:#f7a43c"></div>
<span class="t" style="left:1342px;top:184px;transform:scaleX(0.9769);transform-origin:0 0;color:#000">...sions\squad_loadout_ext</span>
<div style="left:1484px;top:179px;width:13px;height:19px;background:#ebebeb"></div>
<div style="left:1489.0px;top:192px;width:1.2px;height:2px;background:#222"></div>
<div style="left:1491.5px;top:192px;width:1.2px;height:2px;background:#222"></div>
<div style="left:1494.0px;top:192px;width:1.2px;height:2px;background:#222"></div>
<span class="t" style="left:465px;top:204px;transform:scaleX(0.9537);transform-origin:0 0;color:#000">extra_unit_index</span>
<span class="t" style="left:715px;top:204px;transform:scaleX(0.9830);transform-origin:0 0;color:#000">0</span>
<div style="left:1122.75px;top:207.25px;width:3.5px;height:3.5px;border-radius:50%;background:#f7a43c"></div>
<span class="t" style="left:1150px;top:204px;transform:scaleX(0.9830);transform-origin:0 0;color:#000">0</span>
<div style="left:1314.75px;top:207.25px;width:3.5px;height:3.5px;border-radius:50%;background:#f7a43c"></div>
<span class="t" style="left:1342px;top:204px;transform:scaleX(0.9830);transform-origin:0 0;color:#000">0</span>
<span class="t" style="left:465px;top:224px;transform:scaleX(0.9616);transform-origin:0 0;color:#000">squad_female_chance</span>
<span class="t" style="left:715px;top:224px;transform:scaleX(0.9830);transform-origin:0 0;color:#000">0</span>
<div style="left:1122.75px;top:227.25px;width:3.5px;height:3.5px;border-radius:50%;background:#f7a43c"></div>
<span class="t" style="left:1150px;top:224px;transform:scaleX(0.9830);transform-origin:0 0;color:#000">0</span>
<div style="left:1314.75px;top:227.25px;width:3.5px;height:3.5px;border-radius:50%;background:#f7a43c"></div>
<span class="t" style="left:1342px;top:224px;transform:scaleX(0.9830);transform-origin:0 0;color:#000">0</span>
<svg style="left:447px;top:243px" width="11" height="11" viewBox="0 0 11 11"><rect x="0.5" y="0.5" width="10" height="10" fill="#fff" stroke="#6e6e6e"/><path d="M2.5 5.5h6" stroke="#333"/></svg>
<span class="t" style="left:465px;top:244px;transform:scaleX(0.9513);transform-origin:0 0;color:#000">unit_list</span>
<div style="left:1122.75px;top:247.25px;width:3.5px;height:3.5px;border-radius:50%;background:#f7a43c"></div>
<div style="left:1314.75px;top:247.25px;width:3.5px;height:3.5px;border-radius:50%;background:#f7a43c"></div>
<svg style="left:467px;top:263px" width="11" height="11" viewBox="0 0 11 11"><rect x="0.5" y="0.5" width="10" height="10" fill="#fff" stroke="#6e6e6e"/><path d="M2.5 5.5h6" stroke="#333"/></svg>
<span class="t" style="left:485px;top:264px;transform:scaleX(0.9674);transform-origin:0 0;color:#000">1. loadout_data</span>
<div style="left:1122.75px;top:267.25px;width:3.5px;height:3.5px;border-radius:50%;background:#f7a43c"></div>
<div style="left:1314.75px;top:267.25px;width:3.5px;height:3.5px;border-radius:50%;background:#f7a43c"></div>
<span class="t" style="left:505px;top:284px;transform:scaleX(0.9497);transform-origin:0 0;color:#000">is_default_unit</span>
<span class="t" style="left:715px;top:284px;transform:scaleX(0.9830);transform-origin:0 0;color:#000">True</span>
<div style="left:1122.75px;top:287.25px;width:3.5px;height:3.5px;border-radius:50%;background:#f7a43c"></div>
<span class="t" style="left:1150px;top:284px;transform:scaleX(0.9830);transform-origin:0 0;color:#000">True</span>
<div style="left:1314.75px;top:287.25px;width:3.5px;height:3.5px;border-radius:50%;background:#f7a43c"></div>
<span class="t" style="left:1342px;top:284px;transform:scaleX(0.9830);transform-origin:0 0;color:#000">True</span>
<span class="t" style="left:505px;top:304px;transform:scaleX(0.9830);transform-origin:0 0;color:#000">num</span>
<span class="t" style="left:715px;top:304px;transform:scaleX(0.9830);transform-origin:0 0;color:#000">1</span>
<div style="left:1120.0px;top:304.5px;width:9px;height:9px;border-radius:50%;background:#2b82e4"></div>
<span class="t" style="left:1150px;top:304px;transform:scaleX(0.9830);transform-origin:0 0;color:#000">1</span>
<div style="left:1312.0px;top:304.5px;width:9px;height:9px;border-radius:50%;background:#2b82e4"></div>
<span class="t" style="left:1342px;top:304px;transform:scaleX(0.9830);transform-origin:0 0;color:#000">1</span>
<span class="t" style="left:505px;top:324px;transform:scaleX(0.9830);transform-origin:0 0;color:#000">type</span>
<span class="t" style="left:715px;top:324px;transform:scaleX(0.9963);transform-origin:0 0;color:#000">attributes\ebps\races\american\infantry\rifleman_squad_leader_us</span>
<div style="left:1100px;top:319px;width:15px;height:19px;background:#efefef"></div>
<div style="left:1105.0px;top:332px;width:1.2px;height:2px;background:#222"></div>
<div style="left:1107.5px;top:332px;width:1.2px;height:2px;background:#222"></div>
<div style="left:1110.0px;top:332px;width:1.2px;height:2px;background:#222"></div>
<div style="left:1120.0px;top:324.5px;width:9px;height:9px;border-radius:50%;background:#2b82e4"></div>
<span class="t" style="left:1150px;top:324px;transform:scaleX(0.9568);transform-origin:0 0;color:#000">...ifleman_squad_leader_us</span>
<div style="left:1292px;top:319px;width:15px;height:19px;background:#ebebeb"></div>
<div style="left:1297.0px;top:332px;width:1.2px;height:2px;background:#222"></div>
<div style="left:1299.5px;top:332px;width:1.2px;height:2px;background:#222"></div>
<div style="left:1302.0px;top:332px;width:1.2px;height:2px;background:#222"></div>
<div style="left:1312.0px;top:324.5px;width:9px;height:9px;border-radius:50%;background:#2b82e4"></div>
<span class="t" style="left:1342px;top:324px;transform:scaleX(0.9568);transform-origin:0 0;color:#000">...ifleman_squad_leader_us</span>
<div style="left:1484px;top:319px;width:13px;height:19px;background:#ebebeb"></div>
<div style="left:1489.0px;top:332px;width:1.2px;height:2px;background:#222"></div>
<div style="left:1491.5px;top:332px;width:1.2px;height:2px;background:#222"></div>
<div style="left:1494.0px;top:332px;width:1.2px;height:2px;background:#222"></div>
<span class="t" style="left:505px;top:344px;transform:scaleX(0.9689);transform-origin:0 0;color:#000">unit_attachments</span>
<div style="left:1122.75px;top:347.25px;width:3.5px;height:3.5px;border-radius:50%;background:#f7a43c"></div>
<div style="left:1314.75px;top:347.25px;width:3.5px;height:3.5px;border-radius:50%;background:#f7a43c"></div>
<svg style="left:467px;top:363px" width="11" height="11" viewBox="0 0 11 11"><rect x="0.5" y="0.5" width="10" height="10" fill="#fff" stroke="#6e6e6e"/><path d="M2.5 5.5h6" stroke="#333"/></svg>
<span class="t" style="left:485px;top:364px;transform:scaleX(0.9674);transform-origin:0 0;color:#000">2. loadout_data</span>
<div style="left:1120.0px;top:364.5px;width:9px;height:9px;border-radius:50%;background:#2b82e4"></div>
<svg style="left:1128px;top:360px;" width="6" height="6" viewBox="0 0 6 6"><path d="M3 0.5v5M0.5 3h5" stroke="#d62020" stroke-width="1.2"/></svg>
<div style="left:1312.0px;top:364.5px;width:9px;height:9px;border-radius:50%;background:#2b82e4"></div>
<svg style="left:1320px;top:360px;" width="6" height="6" viewBox="0 0 6 6"><path d="M3 0.5v5M0.5 3h5" stroke="#d62020" stroke-width="1.2"/></svg>
<span class="t" style="left:505px;top:384px;transform:scaleX(0.9497);transform-origin:0 0;color:#000">is_default_unit</span>
<span class="t" style="left:715px;top:384px;transform:scaleX(0.9830);transform-origin:0 0;color:#000">True</span>
<span class="t" style="left:1150px;top:384px;transform:scaleX(0.9830);transform-origin:0 0;color:#000">True</span>
<span class="t" style="left:1342px;top:384px;transform:scaleX(0.9830);transform-origin:0 0;color:#000">True</span>
<span class="t" style="left:505px;top:404px;transform:scaleX(0.9830);transform-origin:0 0;color:#000">num</span>
<span class="t" style="left:715px;top:404px;transform:scaleX(0.9830);transform-origin:0 0;color:#000">5</span>
<span class="t" style="left:1150px;top:404px;transform:scaleX(0.9830);transform-origin:0 0;color:#000">5</span>
<span class="t" style="left:1342px;top:404px;transform:scaleX(0.9830);transform-origin:0 0;color:#000">5</span>
<span class="t" style="left:505px;top:424px;transform:scaleX(0.9830);transform-origin:0 0;color:#000">type</span>
<span class="t" style="left:715px;top:424px;transform:scaleX(1.0097);transform-origin:0 0;color:#000">attributes\ebps\races\american\infantry\rifleman_us</span>
<div style="left:1100px;top:419px;width:15px;height:19px;background:#efefef"></div>
<div style="left:1105.0px;top:432px;width:1.2px;height:2px;background:#222"></div>
<div style="left:1107.5px;top:432px;width:1.2px;height:2px;background:#222"></div>
<div style="left:1110.0px;top:432px;width:1.2px;height:2px;background:#222"></div>
<span class="t" style="left:1150px;top:424px;color:#000">...ican\infantry\rifleman_us</span>
<div style="left:1292px;top:419px;width:15px;height:19px;background:#ebebeb"></div>
<div style="left:1297.0px;top:432px;width:1.2px;height:2px;background:#222"></div>
<div style="left:1299.5px;top:432px;width:1.2px;height:2px;background:#222"></div>
<div style="left:1302.0px;top:432px;width:1.2px;height:2px;background:#222"></div>
<span class="t" style="left:1342px;top:424px;color:#000">...ican\infantry\rifleman_us</span>
<div style="left:1484px;top:419px;width:13px;height:19px;background:#ebebeb"></div>
<div style="left:1489.0px;top:432px;width:1.2px;height:2px;background:#222"></div>
<div style="left:1491.5px;top:432px;width:1.2px;height:2px;background:#222"></div>
<div style="left:1494.0px;top:432px;width:1.2px;height:2px;background:#222"></div>
<span class="t" style="left:505px;top:444px;transform:scaleX(0.9689);transform-origin:0 0;color:#000">unit_attachments</span>
<span class="t" style="left:445px;top:464px;transform:scaleX(0.9584);transform-origin:0 0;color:#000">squad_modifier_ext</span>
<span class="t" style="left:715px;top:464px;transform:scaleX(0.9783);transform-origin:0 0;color:#000">sbpextensions\squad_modifier_ext</span>
<div style="left:1100px;top:459px;width:15px;height:19px;background:#efefef"></div>
<div style="left:1105.0px;top:472px;width:1.2px;height:2px;background:#222"></div>
<div style="left:1107.5px;top:472px;width:1.2px;height:2px;background:#222"></div>
<div style="left:1110.0px;top:472px;width:1.2px;height:2px;background:#222"></div>
<div style="left:1122.75px;top:467.25px;width:3.5px;height:3.5px;border-radius:50%;background:#f7a43c"></div>
<span class="t" style="left:1150px;top:464px;transform:scaleX(0.9768);transform-origin:0 0;color:#000">...ions\squad_modifier_ext</span>
<div style="left:1292px;top:459px;width:15px;height:19px;background:#ebebeb"></div>
<div style="left:1297.0px;top:472px;width:1.2px;height:2px;background:#222"></div>
<div style="left:1299.5px;top:472px;width:1.2px;height:2px;background:#222"></div>
<div style="left:1302.0px;top:472px;width:1.2px;height:2px;background:#222"></div>
<div style="left:1314.75px;top:467.25px;width:3.5px;height:3.5px;border-radius:50%;background:#f7a43c"></div>
<span class="t" style="left:1342px;top:464px;transform:scaleX(0.9768);transform-origin:0 0;color:#000">...ions\squad_modifier_ext</span>
<div style="left:1484px;top:459px;width:13px;height:19px;background:#ebebeb"></div>
<div style="left:1489.0px;top:472px;width:1.2px;height:2px;background:#222"></div>
<div style="left:1491.5px;top:472px;width:1.2px;height:2px;background:#222"></div>
<div style="left:1494.0px;top:472px;width:1.2px;height:2px;background:#222"></div>
<svg style="left:427px;top:483px" width="11" height="11" viewBox="0 0 11 11"><rect x="0.5" y="0.5" width="10" height="10" fill="#fff" stroke="#6e6e6e"/><path d="M5.5 2.5v6" stroke="#333"/><path d="M2.5 5.5h6" stroke="#333"/></svg>
<span class="t" style="left:445px;top:484px;transform:scaleX(0.9610);transform-origin:0 0;color:#000">squad_population_ext</span>
<span class="t" style="left:715px;top:484px;transform:scaleX(0.9786);transform-origin:0 0;color:#000">sbpextensions\squad_population_ext</span>
<div style="left:1100px;top:479px;width:15px;height:19px;background:#efefef"></div>
<div style="left:1105.0px;top:492px;width:1.2px;height:2px;background:#222"></div>
<div style="left:1107.5px;top:492px;width:1.2px;height:2px;background:#222"></div>
<div style="left:1110.0px;top:492px;width:1.2px;height:2px;background:#222"></div>
<div style="left:1120.0px;top:484.5px;width:9px;height:9px;border-radius:50%;border:2.5px solid #2a7ad8;box-sizing:border-box;background:#fff"></div>
<span class="t" style="left:1150px;top:484px;transform:scaleX(0.9766);transform-origin:0 0;color:#000">...s\squad_population_ext</span>
<div style="left:1292px;top:479px;width:15px;height:19px;background:#ebebeb"></div>
<div style="left:1297.0px;top:492px;width:1.2px;height:2px;background:#222"></div>
<div style="left:1299.5px;top:492px;width:1.2px;height:2px;background:#222"></div>
<div style="left:1302.0px;top:492px;width:1.2px;height:2px;background:#222"></div>
<div style="left:1312.0px;top:484.5px;width:9px;height:9px;border-radius:50%;border:2.5px solid #2a7ad8;box-sizing:border-box;background:#fff"></div>
<span class="t" style="left:1342px;top:484px;transform:scaleX(0.9766);transform-origin:0 0;color:#000">...s\squad_population_ext</span>
<div style="left:1484px;top:479px;width:13px;height:19px;background:#ebebeb"></div>
<div style="left:1489.0px;top:492px;width:1.2px;height:2px;background:#222"></div>
<div style="left:1491.5px;top:492px;width:1.2px;height:2px;background:#222"></div>
<div style="left:1494.0px;top:492px;width:1.2px;height:2px;background:#222"></div>
<svg style="left:427px;top:503px" width="11" height="11" viewBox="0 0 11 11"><rect x="0.5" y="0.5" width="10" height="10" fill="#fff" stroke="#6e6e6e"/><path d="M5.5 2.5v6" stroke="#333"/><path d="M2.5 5.5h6" stroke="#333"/></svg>
<span class="t" style="left:445px;top:504px;transform:scaleX(0.9552);transform-origin:0 0;color:#000">squad_range_ext</span>
<span class="t" style="left:715px;top:504px;transform:scaleX(0.9780);transform-origin:0 0;color:#000">sbpextensions\squad_range_ext</span>
<div style="left:1100px;top:499px;width:15px;height:19px;background:#efefef"></div>
<div style="left:1105.0px;top:512px;width:1.2px;height:2px;background:#222"></div>
<div style="left:1107.5px;top:512px;width:1.2px;height:2px;background:#222"></div>
<div style="left:1110.0px;top:512px;width:1.2px;height:2px;background:#222"></div>
<div style="left:1122.75px;top:507.25px;width:3.5px;height:3.5px;border-radius:50%;background:#f7a43c"></div>
<span class="t" style="left:1150px;top:504px;transform:scaleX(0.9768);transform-origin:0 0;color:#000">...nsions\squad_range_ext</span>
<div style="left:1292px;top:499px;width:15px;height:19px;background:#ebebeb"></div>
<div style="left:1297.0px;top:512px;width:1.2px;height:2px;background:#222"></div>
<div style="left:1299.5px;top:512px;width:1.2px;height:2px;background:#222"></div>
<div style="left:1302.0px;top:512px;width:1.2px;height:2px;background:#222"></div>
<div style="left:1314.75px;top:507.25px;width:3.5px;height:3.5px;border-radius:50%;background:#f7a43c"></div>
<span class="t" style="left:1342px;top:504px;transform:scaleX(0.9768);transform-origin:0 0;color:#000">...nsions\squad_range_ext</span>
<div style="left:1484px;top:499px;width:13px;height:19px;background:#ebebeb"></div>
<div style="left:1489.0px;top:512px;width:1.2px;height:2px;background:#222"></div>
<div style="left:1491.5px;top:512px;width:1.2px;height:2px;background:#222"></div>
<div style="left:1494.0px;top:512px;width:1.2px;height:2px;background:#222"></div>
<svg style="left:427px;top:523px" width="11" height="11" viewBox="0 0 11 11"><rect x="0.5" y="0.5" width="10" height="10" fill="#fff" stroke="#6e6e6e"/><path d="M5.5 2.5v6" stroke="#333"/><path d="M2.5 5.5h6" stroke="#333"/></svg>
<span class="t" style="left:445px;top:524px;transform:scaleX(0.9593);transform-origin:0 0;color:#000">squad_reinforce_ext</span>
<span class="t" style="left:715px;top:524px;transform:scaleX(0.9784);transform-origin:0 0;color:#000">sbpextensions\squad_reinforce_ext</span>
<div style="left:1100px;top:519px;width:15px;height:19px;background:#efefef"></div>
<div style="left:1105.0px;top:532px;width:1.2px;height:2px;background:#222"></div>
<div style="left:1107.5px;top:532px;width:1.2px;height:2px;background:#222"></div>
<div style="left:1110.0px;top:532px;width:1.2px;height:2px;background:#222"></div>
<div style="left:1120.0px;top:524.5px;width:9px;height:9px;border-radius:50%;border:2.5px solid #2a7ad8;box-sizing:border-box;background:#fff"></div>
<span class="t" style="left:1150px;top:524px;transform:scaleX(0.9768);transform-origin:0 0;color:#000">...ons\squad_reinforce_ext</span>
<div style="left:1292px;top:519px;width:15px;height:19px;background:#ebebeb"></div>
<div style="left:1297.0px;top:532px;width:1.2px;height:2px;background:#222"></div>
<div style="left:1299.5px;top:532px;width:1.2px;height:2px;background:#222"></div>
<div style="left:1302.0px;top:532px;width:1.2px;height:2px;background:#222"></div>
<div style="left:1312.0px;top:524.5px;width:9px;height:9px;border-radius:50%;border:2.5px solid #2a7ad8;box-sizing:border-box;background:#fff"></div>
<span class="t" style="left:1342px;top:524px;transform:scaleX(0.9768);transform-origin:0 0;color:#000">...ons\squad_reinforce_ext</span>
<div style="left:1484px;top:519px;width:13px;height:19px;background:#ebebeb"></div>
<div style="left:1489.0px;top:532px;width:1.2px;height:2px;background:#222"></div>
<div style="left:1491.5px;top:532px;width:1.2px;height:2px;background:#222"></div>
<div style="left:1494.0px;top:532px;width:1.2px;height:2px;background:#222"></div>
<svg style="left:427px;top:543px" width="11" height="11" viewBox="0 0 11 11"><rect x="0.5" y="0.5" width="10" height="10" fill="#fff" stroke="#6e6e6e"/><path d="M5.5 2.5v6" stroke="#333"/><path d="M2.5 5.5h6" stroke="#333"/></svg>
<span class="t" style="left:445px;top:544px;transform:scaleX(0.9625);transform-origin:0 0;color:#000">squad_requirement_ext</span>
<span class="t" style="left:715px;top:544px;transform:scaleX(0.9788);transform-origin:0 0;color:#000">sbpextensions\squad_requirement_ext</span>
<div style="left:1100px;top:539px;width:15px;height:19px;background:#efefef"></div>
<div style="left:1105.0px;top:552px;width:1.2px;height:2px;background:#222"></div>
<div style="left:1107.5px;top:552px;width:1.2px;height:2px;background:#222"></div>
<div style="left:1110.0px;top:552px;width:1.2px;height:2px;background:#222"></div>
<div style="left:1122.75px;top:547.25px;width:3.5px;height:3.5px;border-radius:50%;background:#f7a43c"></div>
<span class="t" style="left:1150px;top:544px;transform:scaleX(0.9768);transform-origin:0 0;color:#000">...\squad_requirement_ext</span>
<div style="left:1292px;top:539px;width:15px;height:19px;background:#ebebeb"></div>
<div style="left:1297.0px;top:552px;width:1.2px;height:2px;background:#222"></div>
<div style="left:1299.5px;top:552px;width:1.2px;height:2px;background:#222"></div>
<div style="left:1302.0px;top:552px;width:1.2px;height:2px;background:#222"></div>
<div style="left:1314.75px;top:547.25px;width:3.5px;height:3.5px;border-radius:50%;background:#f7a43c"></div>
<span class="t" style="left:1342px;top:544px;transform:scaleX(0.9768);transform-origin:0 0;color:#000">...\squad_requirement_ext</span>
<div style="left:1484px;top:539px;width:13px;height:19px;background:#ebebeb"></div>
<div style="left:1489.0px;top:552px;width:1.2px;height:2px;background:#222"></div>
<div style="left:1491.5px;top:552px;width:1.2px;height:2px;background:#222"></div>
<div style="left:1494.0px;top:552px;width:1.2px;height:2px;background:#222"></div>
<div style="left:712px;top:124px;width:1px;height:427px;background:#a0a0a0"></div>
<div style="left:1115px;top:124px;width:1px;height:427px;background:#a0a0a0"></div>
<div style="left:1307px;top:124px;width:1px;height:427px;background:#a0a0a0"></div>
<div style="left:1496px;top:124px;width:1px;height:20px;background:#a0a0a0"></div>
<div style="left:1517px;top:67px;width:100px;height:484px;background:#fcfdfe"></div>
<div style="left:1523px;top:68px;width:94px;height:483px;background:#fff;border:1px solid #a8a8a8;border-bottom:none;box-sizing:border-box"></div>
<span class="t" style="left:1527px;top:74px;transform:scaleX(0.9830);transform-origin:0 0;color:#000">Pro...</span>
<svg style="left:1562px;top:77px;" width="10" height="6" viewBox="0 0 10 6"><path d="M0 0.5h10L5 5.5z" fill="#333"/></svg>
<svg style="left:1581px;top:76px;" width="9" height="10" viewBox="0 0 9 10"><path d="M2.5 0.5h4v5h-4z M1 5.5h7 M4.5 5.5v4" fill="none" stroke="#333" stroke-width="1.2"/><rect x="2" y="1" width="2" height="4" fill="#333"/></svg>
<svg style="left:1600px;top:77px;" width="10" height="9" viewBox="0 0 10 9"><path d="M0.8 0.8L9.2 8.2M9.2 0.8L0.8 8.2" stroke="#333" stroke-width="1.2"/></svg>
<div style="left:1526px;top:90px;width:88px;height:461px;background:#fff;border:1px solid #a8a8a8;border-bottom:none;box-sizing:border-box"></div>
<div style="left:1527px;top:91px;width:86px;height:59px;background:#dadada"></div>
<div style="left:1536px;top:119px;width:22px;height:22px;background:#cde8fa;border:1px solid #2d5f8a;box-sizing:border-box"></div>
<svg style="left:1536px;top:119px;" width="22" height="22" viewBox="0 0 22 22"><rect x="4" y="4" width="5" height="5" fill="#222"/><path d="M6.5 5.2v2.6M5.2 6.5h2.6" stroke="#fff" stroke-width="1"/><rect x="4" y="13" width="5" height="5" fill="#222"/><path d="M6.5 14.2v2.6M5.2 15.5h2.6" stroke="#fff" stroke-width="1"/><g stroke="#222" stroke-width="1" shape-rendering="crispEdges"><path d="M10 4.5h5M10 6.5h5M10 8.5h5M10 10.5h5M10 12.5h5M10 15.5h5M10 17.5h5M16 6.5h2M16 8.5h2M16 10.5h2M16 12.5h2M16 17.5h2"/></g></svg>
<svg style="left:1561px;top:122px;" width="17" height="16" viewBox="0 0 17 16"><rect x="1" y="1" width="7" height="6.5" fill="#333"/><text x="4.5" y="6.6" font-size="6.5" font-family="Liberation Sans" font-weight="bold" fill="#fff" text-anchor="middle">A</text><text x="4.5" y="14.8" font-size="7" font-family="Liberation Sans" font-weight="bold" fill="#222" text-anchor="middle">Z</text><path d="M12 4v8" stroke="#0b5aa6" stroke-width="1.8"/><path d="M9.2 10L12 13.8L14.8 10z" fill="#0b5aa6"/></svg>
<div style="left:1589px;top:117px;width:20px;height:26px;background:#fff;border:1px solid #7a7a7a;box-sizing:border-box"></div>
<svg style="left:1590px;top:118px;" width="18" height="24" viewBox="0 0 18 24"><path d="M6.5 7L18 18.5M18 7L6.5 18.5" stroke="#d89494" stroke-width="1.5"/></svg></body></html>
